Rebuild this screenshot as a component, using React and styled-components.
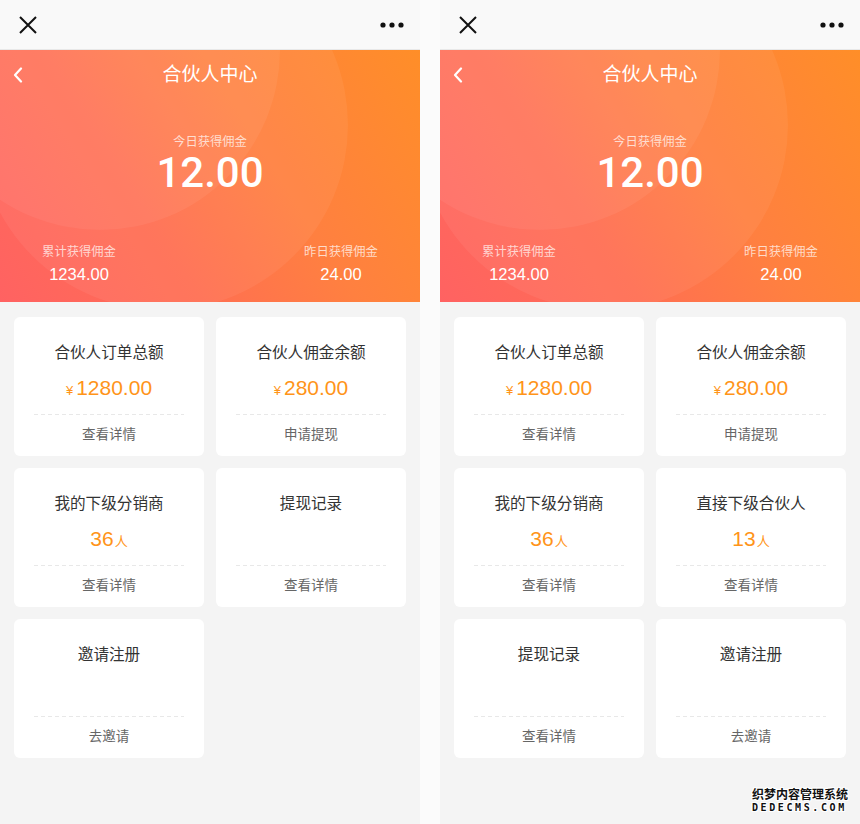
import React from "react";
import styled, { createGlobalStyle } from "styled-components";

const GlobalStyle = createGlobalStyle`
  html, body {
    margin: 0;
    padding: 0;
    background: #fbfbfb;
  }
  body {
    font-family: "Liberation Sans", "Noto Sans CJK SC", sans-serif;
    -webkit-font-smoothing: antialiased;
  }
`;

const leftCards = [
  { title: "合伙人订单总额", value: "1280.00", prefix: "¥", action: "查看详情" },
  { title: "合伙人佣金余额", value: "280.00", prefix: "¥", action: "申请提现" },
  { title: "我的下级分销商", value: "36", suffix: "人", action: "查看详情" },
  { title: "提现记录", action: "查看详情" },
  { title: "邀请注册", action: "去邀请" },
];

const rightCards = [
  { title: "合伙人订单总额", value: "1280.00", prefix: "¥", action: "查看详情" },
  { title: "合伙人佣金余额", value: "280.00", prefix: "¥", action: "申请提现" },
  { title: "我的下级分销商", value: "36", suffix: "人", action: "查看详情" },
  { title: "直接下级合伙人", value: "13", suffix: "人", action: "查看详情" },
  { title: "提现记录", action: "查看详情" },
  { title: "邀请注册", action: "去邀请" },
];

const Phone = ({ cards }) => {
  return (
    <Screen>
      <TopBar>
        <svg width="18" height="18" viewBox="0 0 18 18">
          <path d="M1 1 L17 17 M17 1 L1 17" stroke="#111" strokeWidth="2" fill="none" />
        </svg>
        <svg width="24" height="6" viewBox="0 0 24 6">
          <circle cx="3" cy="3" r="2.6" fill="#111" />
          <circle cx="12" cy="3" r="2.6" fill="#111" />
          <circle cx="21" cy="3" r="2.6" fill="#111" />
        </svg>
      </TopBar>

      {/* orange header */}
      <Header>
        <NavRow>
          <svg width="10" height="16" viewBox="0 0 10 16">
            <polyline points="8,1.5 2,8 8,14.5" stroke="#fff" strokeWidth="2.2" fill="none" strokeLinecap="round" strokeLinejoin="round" />
          </svg>
          <PageTitle>合伙人中心</PageTitle>
          <span />
        </NavRow>
        <Label>今日获得佣金</Label>
        <BigAmount>12.00</BigAmount>
        <StatsRow>
          <Stat>
            <Label>累计获得佣金</Label>
            <StatValue>1234.00</StatValue>
          </Stat>
          <Stat>
            <Label>昨日获得佣金</Label>
            <StatValue>24.00</StatValue>
          </Stat>
        </StatsRow>
      </Header>

      {/* card grid */}
      <Grid>
        {cards.map((c, index) => {
          return (
            <Card key={index}>
              <CardTitle>{c.title}</CardTitle>
              <CardValue>
                {c.prefix && <Small $gap="right">{c.prefix}</Small>}
                {c.value}
                {c.suffix && <Small>{c.suffix}</Small>}
              </CardValue>
              <Dashed />
              <CardAction>{c.action}</CardAction>
            </Card>
          );
        })}
      </Grid>
    </Screen>
  );
};

const App = () => {
  return (
    <Page>
      <GlobalStyle />
      <Phone cards={leftCards} />
      <Phone cards={rightCards} />
      <Watermark>
        <div>织梦内容管理系统</div>
        <div className="en">DEDECMS.COM</div>
      </Watermark>
    </Page>
  );
};

const Page = styled.div`
  position: relative;
  display: flex;
  gap: 20px;
  width: 860px;
  height: 824px;
  background: #fbfbfb;
  overflow: hidden;
`;

const Screen = styled.section`
  width: 420px;
  height: 824px;
  background: #f4f4f4;
  display: flex;
  flex-direction: column;
`;

const TopBar = styled.div`
  height: 49px;
  border-bottom: 1px solid #e8e8e8;
  background: #f9f9f9;
  display: flex;
  align-items: center;
  justify-content: space-between;
  padding: 0 16px 0 19px;
`;

const Header = styled.div`
  position: relative;
  overflow: hidden;
  padding-bottom: 17px;
  background: linear-gradient(58deg, #ff6262 0%, #ff6f52 35%, #ff8040 62%, #ff8e28 100%);
  color: #fff;
  display: flex;
  flex-direction: column;
  align-items: center;
  &::before,
  &::after {
    content: "";
    position: absolute;
    border-radius: 50%;
    background: rgba(255, 255, 255, 0.055);
    pointer-events: none;
  }
  &::before {
    left: -80px;
    top: -180px;
    width: 360px;
    height: 360px;
  }
  &::after {
    left: -22px;
    top: -110px;
    width: 370px;
    height: 370px;
  }
  > * {
    position: relative;
    z-index: 1;
  }
`;

const NavRow = styled.div`
  width: 100%;
  height: 50px;
  display: grid;
  grid-template-columns: 40px 1fr 40px;
  align-items: center;
  svg {
    margin-left: 13px;
  }
`;

const PageTitle = styled.h1`
  margin: 0;
  text-align: center;
  font-size: 19px;
  font-weight: 400;
  line-height: 24px;
`;

const Label = styled.div`
  margin-top: 33px;
  font-size: 12.3px;
  line-height: 18px;
  color: rgba(255, 255, 255, 0.72);
`;

const BigAmount = styled.div`
  font-family: Roboto, "Liberation Sans", sans-serif;
  font-size: 42px;
  line-height: 44px;
  font-weight: 500;
`;

const StatsRow = styled.div`
  width: 100%;
  box-sizing: border-box;
  padding: 0 42px;
  margin-top: 48px;
  display: flex;
  justify-content: space-between;
  ${Label} {
    margin-top: 0;
  }
`;

const Stat = styled.div`
  text-align: center;
  width: 74px;
`;

const StatValue = styled.div`
  margin-top: 2px;
  font-size: 16.5px;
  line-height: 22px;
`;

const Grid = styled.div`
  display: grid;
  grid-template-columns: 1fr 1fr;
  gap: 12px;
  padding: 15px 14px;
`;

const Card = styled.div`
  background: #fff;
  border-radius: 6px;
  padding: 26px 20px 11px;
  display: flex;
  flex-direction: column;
  align-items: stretch;
  text-align: center;
`;

const CardTitle = styled.div`
  font-size: 15.6px;
  line-height: 20px;
  color: #333;
`;

const CardValue = styled.div`
  margin-top: 10px;
  height: 30px;
  line-height: 30px;
  font-size: 21px;
  color: #ff9419;
`;

const Small = styled.span`
  font-size: 13px;
  margin: ${(p) => (p.$gap === "right" ? "0 3px 0 0" : "0 0 0 1px")};
`;

const Dashed = styled.div`
  margin-top: 11px;
  height: 1px;
  background-image: repeating-linear-gradient(to right, #e8e8e8 0 4px, transparent 4px 7px);
`;

const CardAction = styled.div`
  margin-top: 10px;
  font-size: 13.5px;
  line-height: 20px;
  color: #666;
`;

const Watermark = styled.div`
  position: absolute;
  right: 12px;
  bottom: 9px;
  font-family: "Noto Sans CJK SC", sans-serif;
  font-weight: 700;
  font-size: 12px;
  line-height: 14px;
  color: #111;
  text-shadow: 1px 0 #fff, -1px 0 #fff, 0 1px #fff, 0 -1px #fff, 1px 1px #fff, -1px -1px #fff, 1px -1px #fff, -1px 1px #fff;
  .en {
    font-family: "DejaVu Sans Mono", monospace;
    font-size: 10px;
    letter-spacing: 2.6px;
  }
`;

export default App;
